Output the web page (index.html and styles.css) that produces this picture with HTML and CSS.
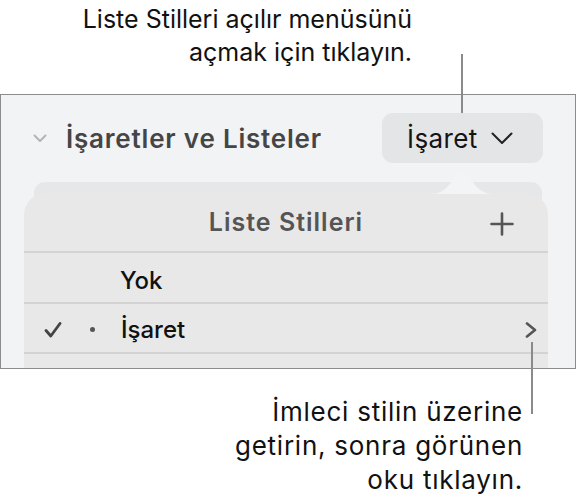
FILE: index.html
```html
<!DOCTYPE html>
<html lang="tr">
<head>
<meta charset="utf-8">
<link rel="stylesheet" href="styles.css">
</head>
<body>
<div class="page">
  <div class="top-area">
    <p class="note note-top">Liste Stilleri açılır menüsünü<br>açmak için tıklayın.</p>
  </div>
  <div class="frame">
    <div class="section-head">
      <div class="title">
        <svg class="disclosure" width="14" height="9" viewBox="0 0 14 9"><path d="M1.5 1.5 L7 7 L12.5 1.5" fill="none" stroke="#b4b4b6" stroke-width="2" stroke-linecap="round" stroke-linejoin="round"/></svg>
        <span>İşaretler ve Listeler</span>
      </div>
      <div class="popup-btn">
        <span>İşaret</span>
        <svg width="22" height="13" viewBox="0 0 22 13"><path d="M1.5 1.5 L11 11 L20.5 1.5" fill="none" stroke="#222" stroke-width="2" stroke-linecap="round" stroke-linejoin="round"/></svg>
      </div>
    </div>
    <div class="pop-stack">
      <div class="back-card"></div>
      <div class="popover">
        <div class="pop-head">
          <span>Liste Stilleri</span>
          <svg class="plus" width="24" height="24" viewBox="0 0 24 24"><path d="M12 1.5 V22.5 M1.5 12 H22.5" stroke="#555" stroke-width="2.6" stroke-linecap="round"/></svg>
        </div>
        <div class="row row-none"><span class="label">Yok</span></div>
        <div class="row row-bullet">
          <svg class="check" width="18" height="16" viewBox="0 0 18 16"><path d="M2 8.5 L6.8 14 L16 1.5" fill="none" stroke="#444" stroke-width="2.8" stroke-linecap="round" stroke-linejoin="round"/></svg>
          <span class="dot"></span>
          <span class="label">İşaret</span>
          <svg class="chev-right" width="12" height="16" viewBox="0 0 12 16"><path d="M2 1.5 L10 8 L2 14.5" fill="none" stroke="#555" stroke-width="2.6" stroke-linecap="round" stroke-linejoin="round"/></svg>
        </div>
        <div class="row row-empty"></div>
      </div>
      <svg class="pop-arrow" width="60" height="24" viewBox="0 0 60 24"><path d="M0 24 C12 24 18 14 24 5 Q30 -2 36 5 C42 14 48 24 60 24 Z" fill="#f3f4f6"/></svg>
    </div>
  </div>
  <p class="note note-bottom">İmleci stilin üzerine<br>getirin, sonra görünen<br>oku tıklayın.</p>
  <div class="leader leader-top"></div>
  <div class="leader leader-bottom"></div>
</div>
</body>
</html>
```

FILE: styles.css
```css
* { box-sizing: border-box; }

html, body {
  margin: 0;
  padding: 0;
  background: #ffffff;
}

body {
  font-family: Inter, Roboto, "Liberation Sans", sans-serif;
  color: #111;
}

.page {
  position: relative;
  width: 577px;
  height: 502px;
  overflow: hidden;
}

.top-area {
  height: 94px;
  padding-top: 3px;
}

.note {
  margin: 0;
  font-size: 25px;
  line-height: 33px;
  text-align: right;
  color: #111;
}

.note-top {
  padding-right: 165px;
}

.note-bottom {
  margin-top: 26px;
  padding-right: 54px;
  font-size: 26px;
  line-height: 34px;
  letter-spacing: 0.75px;
}

.frame {
  width: 576px;
  height: 275px;
  border: 1px solid #8c8c8c;
  background: #f2f3f5;
  overflow: hidden;
}

.section-head {
  display: flex;
  align-items: center;
  justify-content: space-between;
  padding: 18px 32px 19px 32px;
}

.title {
  display: flex;
  align-items: center;
  gap: 19px;
  font-size: 26px;
  font-weight: 600;
  letter-spacing: 0.8px;
  color: #454547;
}

.disclosure {
  margin-top: 1px;
}

.popup-btn {
  display: flex;
  align-items: center;
  gap: 13px;
  width: 161px;
  height: 50px;
  padding: 0 25px;
  border-radius: 11px;
  background: #e4e5e7;
  font-size: 26px;
  letter-spacing: 0.4px;
  color: #141414;
}

.pop-stack {
  position: relative;
  display: grid;
}

.back-card {
  grid-area: 1 / 1;
  margin: 0 33px 0 33px;
  height: 60px;
  border-radius: 11px;
  background: #e6e7e9;
}

.popover {
  grid-area: 1 / 1;
  margin: 11px 27px 0 23px;
  border-radius: 22px 22px 0 0;
  background: #e8e8e8;
  height: 200px;
}

.pop-arrow {
  position: absolute;
  left: 431px;
  top: -12px;
}

.pop-head {
  position: relative;
  display: flex;
  align-items: center;
  justify-content: center;
  height: 60px;
  border-bottom: 2px solid #d3d3d3;
  font-size: 25px;
  font-weight: 600;
  letter-spacing: 1px;
  color: #555;
}

.plus {
  position: absolute;
  right: 34px;
  top: 19px;
}

.row {
  display: flex;
  align-items: center;
  border-bottom: 2px solid #d3d3d3;
  font-size: 24px;
  font-weight: 500;
  color: #111;
}

.row-none {
  height: 51px;
  padding: 6px 0 0 96px;
}

.row-bullet {
  height: 50px;
  padding: 3px 11px 0 20px;
}

.row-empty {
  height: 40px;
}

.dot {
  width: 5px;
  height: 5px;
  border-radius: 50%;
  background: #555;
  margin-left: 28px;
}

.row-bullet .label {
  margin-left: 26px;
  flex: 1;
}

.leader {
  position: absolute;
  width: 2px;
  background: #8a8a8a;
}

.leader-top {
  left: 461px;
  top: 54px;
  height: 59px;
}

.leader-bottom {
  left: 531px;
  top: 342px;
  height: 72px;
}
```
